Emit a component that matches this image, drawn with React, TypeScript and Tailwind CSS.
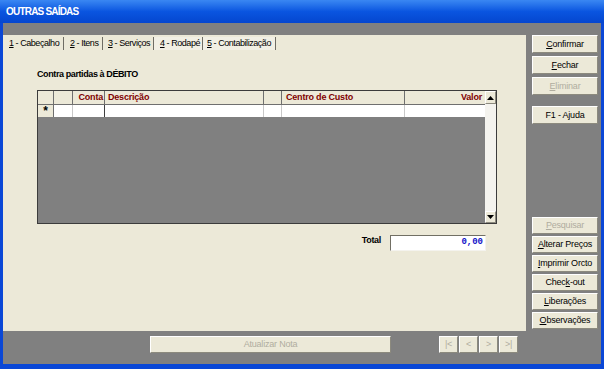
import React from 'react';

const Key: React.FC<{ k: string; rest: string; pre?: string }> = ({ k, rest, pre = '' }) => (
  <span className="whitespace-pre">
    {pre}
    <span className="underline underline-offset-[1px]">{k}</span>
    {rest}
  </span>
);

const Btn: React.FC<{ children: React.ReactNode; disabled?: boolean; className?: string }> = ({
  children,
  disabled,
  className = '',
}) => (
  <div
    className={`flex items-center justify-center whitespace-nowrap bg-[#ece9d8] border border-t-white border-l-white border-r-[#8c8a7e] border-b-[#8c8a7e] text-[9px] tracking-[-0.2px] leading-none ${
      disabled ? 'text-[#b0ad9f]' : 'text-black'
    } ${className}`}
  >
    {children}
  </div>
);

const tabs = [
  { n: '1', t: ' - Cabeçalho', w: 'w-[61px]', pl: 'pl-[6px]' },
  { n: '2', t: ' - Itens', w: 'w-[39px]', pl: 'pl-[6px]' },
  { n: '3', t: ' - Serviços', w: 'w-[51px]', pl: 'pl-[5px]' },
  { n: '4', t: ' - Rodapé', w: 'w-[49px]', pl: 'pl-[6px]' },
  { n: '5', t: ' - Contabilização', w: 'w-[73px]', pl: 'pl-[4px]' },
];

const Arrow: React.FC<{ down?: boolean }> = ({ down }) => (
  <svg width="7" height="4" viewBox="0 0 7 4">
    {down ? <polygon points="0,0 7,0 3.5,4" fill="#000" /> : <polygon points="0,4 7,4 3.5,0" fill="#000" />}
  </svg>
);

const App: React.FC = () => {
  return (
    <div className="w-[604px] h-[369px] overflow-hidden flex flex-col font-['Liberation_Sans',Arial,sans-serif] select-none">
      {/* title bar */}
      <div className="h-[23px] flex items-center pl-[6px] bg-gradient-to-b from-[#3a87f2] via-[#0a55e0] to-[#0546cf]">
        <span className="text-white font-bold text-[10px] tracking-[-0.8px] whitespace-nowrap">OUTRAS SAÍDAS</span>
      </div>

      {/* body */}
      <div className="flex-1 flex bg-[#808080] border-x-[3px] border-b-[5px] border-[#0a47d6]">
        {/* left column */}
        <div className="w-[523px] flex flex-col pt-[12px]">
          <div className="h-[296px] bg-[#ece9d8] flex flex-col">
            {/* tabs */}
            <div className="h-[17px] flex items-center text-[9px] tracking-[-0.45px] text-black">
              {tabs.map((tab) => (
                <div
                  key={tab.n}
                  className={`${tab.w} ${tab.pl} h-[13px] flex items-center whitespace-nowrap border-r border-[#6f6d64] ${
                    tab.n === '4' || tab.n === '5' ? 'bg-[#f1efe4]' : ''
                  }`}
                >
                  <Key k={tab.n} rest={tab.t} />
                </div>
              ))}
            </div>

            <div className="pl-[34px] flex flex-col">
              <div className="mt-[17px] h-[11px] flex items-center text-[9px] font-bold tracking-[-0.4px] text-black whitespace-nowrap">
                Contra partidas à DÉBITO
              </div>

              {/* grid */}
              <div className="mt-[10px] w-[460px] h-[134px] border border-[#3c3c3c] bg-[#808080] flex">
                <div className="flex-1 flex flex-col">
                  <div className="grid grid-cols-[16px_19px_32px_159px_18px_123px_80px] h-[14px] bg-[#ece9d8] text-[9px] font-bold tracking-[-0.2px] text-[#800000] leading-none whitespace-nowrap">
                    <div className="border-r border-b border-[#6f6f6f]" />
                    <div className="border-r border-b border-[#6f6f6f]" />
                    <div className="border-r border-b border-[#6f6f6f] flex items-center justify-end pr-[1px]">Conta</div>
                    <div className="border-r border-b border-[#6f6f6f] flex items-center pl-[3px]">Descrição</div>
                    <div className="border-r border-b border-[#6f6f6f]" />
                    <div className="border-r border-b border-[#6f6f6f] flex items-center pl-[4px]">Centro de Custo</div>
                    <div className="border-b border-[#6f6f6f] flex items-center justify-end pr-[3px]">Valor</div>
                  </div>
                  <div className="grid grid-cols-[16px_19px_32px_159px_18px_123px_80px] h-[12px] bg-white">
                    <div className="bg-[#ece9d8] border-r border-[#6f6f6f] flex items-center justify-center text-[12px] leading-none font-bold">*</div>
                    <div className="border-r border-[#c8c8c8]" />
                    <div className="border-r border-[#404040]" />
                    <div className="border-r border-[#c8c8c8]" />
                    <div className="border-r border-[#c8c8c8]" />
                    <div className="border-r border-[#c8c8c8]" />
                    <div />
                  </div>
                </div>
                {/* scrollbar */}
                <div className="w-[11px] flex flex-col bg-[#f4f3ee]">
                  <div className="h-[13px] bg-[#ece9d8] border border-t-white border-l-white border-r-[#8c8a7e] border-b-[#8c8a7e] flex items-center justify-center">
                    <Arrow />
                  </div>
                  <div className="flex-1" />
                  <div className="h-[12px] bg-[#ece9d8] border border-t-white border-l-white border-r-[#8c8a7e] border-b-[#8c8a7e] flex items-center justify-center">
                    <Arrow down />
                  </div>
                </div>
              </div>

              {/* total */}
              <div className="mt-[11px] w-[449px] flex items-center justify-end">
                <span className="text-[9px] font-bold tracking-[-0.3px] text-black mr-[9px] -mt-[4px]">Total</span>
                <div className="w-[96px] h-[16px] bg-white border border-t-[#716f64] border-l-[#716f64] border-r-[#f4f3ee] border-b-[#f4f3ee] flex items-center justify-end pr-[2px]">
                  <span className="font-['Liberation_Mono',monospace] font-bold text-[9px] text-[#1010c8]">0,00</span>
                </div>
              </div>
            </div>
          </div>

          {/* bottom bar */}
          <div className="h-[33px] flex items-start pt-[5px]">
            <Btn disabled className="ml-[147px] w-[241px] h-[17px]">
              Atualizar Nota
            </Btn>
            <div className="ml-[48px] flex gap-[1px]">
              {['|<', '<', '>', '>|'].map((s) => (
                <Btn key={s} disabled className="w-[19px] h-[17px]">
                  {s}
                </Btn>
              ))}
            </div>
          </div>
        </div>

        {/* right sidebar */}
        <div className="ml-[6px] w-[66px] flex flex-col pt-[12px]">
          <Btn className="h-[18px]">
            <Key k="C" rest="onfirmar" />
          </Btn>
          <Btn className="h-[18px] mt-[3px]">
            <Key k="F" rest="echar" />
          </Btn>
          <Btn disabled className="h-[18px] mt-[3px]">
            <Key k="E" rest="liminar" />
          </Btn>
          <Btn className="h-[18px] mt-[11px]">F1 - Ajuda</Btn>

          <Btn disabled className="h-[17px] mt-[93px]">
            <Key k="P" rest="esquisar" />
          </Btn>
          <Btn className="h-[17px] mt-[2px]">
            <Key k="A" rest="lterar Preços" />
          </Btn>
          <Btn className="h-[17px] mt-[2px]">
            <Key k="I" rest="mprimir Orcto" />
          </Btn>
          <Btn className="h-[17px] mt-[2px]">
            <Key pre="Chec" k="k" rest="-out" />
          </Btn>
          <Btn className="h-[17px] mt-[2px]">
            <Key k="L" rest="iberações" />
          </Btn>
          <Btn className="h-[17px] mt-[2px]">
            <Key k="O" rest="bservações" />
          </Btn>
        </div>
      </div>
    </div>
  );
};

export default App;
